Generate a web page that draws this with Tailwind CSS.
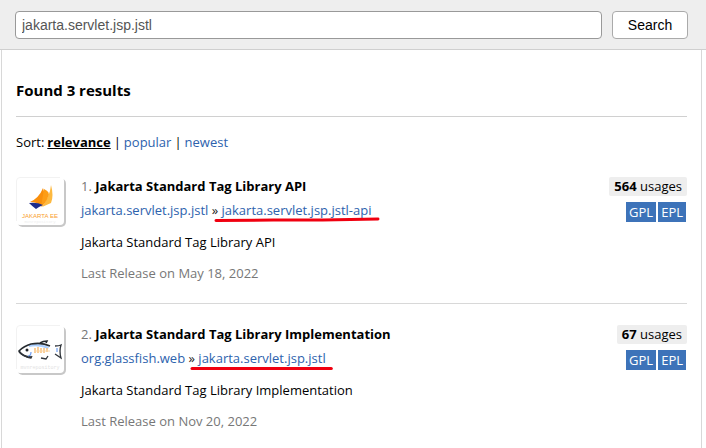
<!DOCTYPE html>
<html lang="en">
<head>
<meta charset="utf-8">
<title>Search results</title>
<script src="https://cdn.jsdelivr.net/npm/@tailwindcss/browser@4"></script>
</head>
<body class="flex min-h-screen flex-col overflow-x-hidden bg-white font-['Open_Sans','Noto_Sans',sans-serif] text-[13px] leading-5 text-black">
<header class="border-b border-[#cfcfcf] bg-[#eee] pt-[11px] pr-[18px] pb-[10px] pl-[15px]">
  <form class="flex gap-[10px]">
    <label for="q" class="sr-only">Search artifacts</label>
    <input id="q" type="text" value="jakarta.servlet.jsp.jstl" class="h-7 min-w-0 flex-1 rounded-[4px] border border-[#999] bg-white px-[6px] font-['Liberation_Sans',sans-serif] text-[14px] leading-5 text-[#555] outline-none">
    <button type="button" class="h-7 w-[76px] rounded-[4px] border border-[#aaa] bg-white font-['Liberation_Sans',sans-serif] text-[14px]">Search</button>
  </form>
</header>
<main class="mr-1 ml-px flex-1 border-x border-[#d8d8d8] px-[14px] pt-[30px]">
  <h1 class="border-b border-[#d0d0d0] pb-4 text-[15px] font-bold">Found 3 results</h1>
  <nav class="flex gap-[3px] pt-[15px] pb-[24px]"><span>Sort:</span><a href="#" class="font-bold underline">relevance</a><span>|</span><a href="#" class="text-[#2d62ad]">popular</a><span>|</span><a href="#" class="text-[#2d62ad]">newest</a></nav>

  <article class="flex border-b border-[#d8d8d8] pb-5">
    <svg class="mt-px mr-[15px] h-[50px] w-[50px] shrink-0" viewBox="0 0 50 50" role="img" aria-label="Jakarta EE">
      <rect x="1.5" y="1.5" width="48.5" height="48.5" rx="5" fill="#c8c8c8"/>
      <rect x="0" y="0" width="48" height="48" rx="4" fill="#fff"/>
      <path d="M0.5 44V4Q0.5 0.5 4 0.5H44" fill="none" stroke="#f2f2f2"/>
      <path d="M35 8Q38 19 35 26L26 30Q34 19 35 8Z" fill="#fdb940"/>
      <path d="M27 11Q31 22 25 29Q21 25 14 25Q23 21 27 11Z" fill="#f98f0c"/>
      <path d="M28 12Q35 15 32 20Q30 26 25 30Z" fill="#fd9d16"/>
      <path d="M13 26Q21 25 27 28L23 30 20 32Q16 29 13 26Z" fill="#1d2c8b"/>
      <text x="24" y="41" text-anchor="middle" font-family="Liberation Sans, sans-serif" font-size="6" fill="#f9a02c">JAKARTA EE</text>
      <text x="24" y="46" text-anchor="middle" font-family="Liberation Mono, monospace" font-size="4" fill="#eee">mvnrepository</text>
    </svg>
    <div class="min-w-0 flex-1">
      <h2 class="mb-1"><span class="text-[#777]">1.</span> <a href="#" class="font-bold">Jakarta Standard Tag Library API</a></h2>
      <p class="mb-3 text-[#222]"><a href="#" class="text-[#2d62ad]">jakarta.servlet.jsp.jstl</a> » <span class="relative inline-block"><a href="#" class="text-[#2d62ad]">jakarta.servlet.jsp.jstl-api</a><svg class="absolute top-[17px] -left-2 h-[6px] w-[calc(100%+16px)]" viewBox="0 0 168 6" preserveAspectRatio="none" aria-hidden="true"><path d="M2 3.5L60 3 110 3 166 2" fill="none" stroke="#f00010" stroke-width="3" stroke-linecap="round"/></svg></span></p>
      <p class="mb-[11px]">Jakarta Standard Tag Library API</p>
      <p class="text-[#777]">Last Release on May 18, 2022</p>
    </div>
    <div class="flex flex-col items-end gap-[6px] pt-px">
      <a href="#" class="rounded-[2px] bg-[#eee] px-[5px] leading-[19px]"><b>564</b> usages</a>
      <div class="mr-px flex gap-[2px] text-white"><span class="bg-[#3d73b9] px-[3px]">GPL</span><span class="bg-[#3d73b9] px-[3px]">EPL</span></div>
    </div>
  </article>

  <article class="flex pt-5 pb-5">
    <svg class="mt-px mr-[15px] h-[50px] w-[50px] shrink-0" viewBox="0 0 50 50" role="img" aria-label="GlassFish">
      <rect x="1.5" y="1.5" width="48.5" height="48.5" rx="5" fill="#c8c8c8"/>
      <rect x="0" y="0" width="48" height="48" rx="4" fill="#fff"/>
      <path d="M0.5 44V4Q0.5 0.5 4 0.5H44" fill="none" stroke="#f2f2f2"/>
      <path d="M13 20Q22 17 33 22L32 24Q23 20 13 22Z" fill="#acd0ff"/>
      <path d="M15 32Q7 32 3 26Q8 21 15 19Q26 17 34 21M24 18Q27 16 31 16L30 18" fill="none" stroke="#262b30" stroke-width="1.6"/>
      <path d="M3 27Q8 32 15 33L16 31M25 33L30 34 32 31M39 21Q43 21 45 20Q43 26 45 33L39 29" fill="none" stroke="#30353b" stroke-width="1.3"/>
      <circle cx="11" cy="25" r="1.5" fill="#202428"/>
      <path d="M12 31Q15 31 15 27M41 23V27" fill="none" stroke="#6d9df2" stroke-width="1.2"/>
      <path d="M19 23V28M22 22V28M25 23V28M28 23V28M31 23V27" stroke="#fac17a" stroke-width="1.5"/>
      <path d="M18 26H34" stroke="#fad6a8"/>
      <text x="24" y="44" text-anchor="middle" font-family="Liberation Mono, monospace" font-size="5" fill="#e2e2e2">mvnrepository</text>
    </svg>
    <div class="min-w-0 flex-1">
      <h2 class="mb-1"><span class="text-[#777]">2.</span> <a href="#" class="font-bold">Jakarta Standard Tag Library Implementation</a></h2>
      <p class="mb-3 text-[#222]"><a href="#" class="text-[#2d62ad]">org.glassfish.web</a> » <span class="relative inline-block"><a href="#" class="text-[#2d62ad]">jakarta.servlet.jsp.jstl</a><svg class="absolute top-[17px] -left-2 h-[6px] w-[calc(100%+16px)]" viewBox="0 0 142 6" preserveAspectRatio="none" aria-hidden="true"><path d="M2 3.5H140" fill="none" stroke="#f00010" stroke-width="3" stroke-linecap="round"/></svg></span></p>
      <p class="mb-[11px]">Jakarta Standard Tag Library Implementation</p>
      <p class="text-[#777]">Last Release on Nov 20, 2022</p>
    </div>
    <div class="flex flex-col items-end gap-[6px] pt-px">
      <a href="#" class="rounded-[2px] bg-[#eee] px-[5px] leading-[19px]"><b>67</b> usages</a>
      <div class="mr-px flex gap-[2px] text-white"><span class="bg-[#3d73b9] px-[3px]">GPL</span><span class="bg-[#3d73b9] px-[3px]">EPL</span></div>
    </div>
  </article>
</main>
</body>
</html>
